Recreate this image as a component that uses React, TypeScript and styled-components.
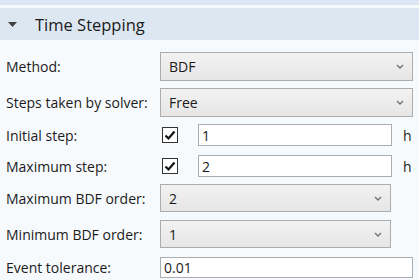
import React from 'react'
import styled, { createGlobalStyle } from 'styled-components'

const Global = createGlobalStyle`
  html, body {
    margin: 0;
    padding: 0;
    background: #f7fafd;
  }
  body {
    font-family: "Open Sans", "Noto Sans", sans-serif;
    color: #1b1b1b;
  }
`

const Page = styled.div`
  width: 419px;
  height: 280px;
  overflow: hidden;
  background: #f7fafd;
`

const TopStrip = styled.div`
  height: 5px;
  background: #dce7f3;
  margin-bottom: 3px;
`

const SectionHeader = styled.div`
  height: 32px;
  background: #dde7f2;
  display: flex;
  align-items: center;
  gap: 0;
  font-size: 16.5px;
  color: #1a1a1a;
`

const Caret = styled.svg`
  width: 9px;
  height: 5px;
  margin: 0 18px 0 8px;
`

const Body = styled.div`
  display: flex;
  flex-direction: column;
  padding: 0 6px 0 6px;
`

const Row = styled.div<{ $top: number; $h: number }>`
  display: flex;
  align-items: center;
  margin-top: ${p => p.$top}px;
  height: ${p => p.$h}px;
`

const Label = styled.div`
  width: 154px;
  flex: none;
  font-size: 14px;
`

const Select = styled.div<{ $w: number }>`
  box-sizing: border-box;
  width: ${p => p.$w}px;
  height: 100%;
  border: 1px solid #acacac;
  background: linear-gradient(#f2f2f2, #e6e6e6);
  display: flex;
  align-items: center;
  justify-content: space-between;
  padding: 0 8px 0 8px;
  font-size: 14px;
`

const Chevron = styled.svg`
  width: 8px;
  height: 5px;
`

const Check = styled.div`
  box-sizing: border-box;
  width: 16px;
  height: 16px;
  margin: 0 20px 0 2px;
  border: 1px solid #333;
  background: #fff;
  display: flex;
  align-items: center;
  justify-content: center;
`

const Input = styled.div<{ $w: number }>`
  box-sizing: border-box;
  width: ${p => p.$w}px;
  height: 100%;
  border: 1px solid #abadb3;
  background: #fff;
  display: flex;
  align-items: center;
  padding-left: 3px;
  font-size: 14px;
`

const Unit = styled.div`
  margin-left: 11px;
  font-size: 14px;
`

function Drop({ value, w }: { value: string; w: number }) {
  return (
    <Select $w={w}>
      <span>{value}</span>
      <Chevron viewBox="0 0 8 5">
        <path d="M1 1 L4 4 L7 1" stroke="#707070" strokeWidth="1.3" fill="none" />
      </Chevron>
    </Select>
  )
}

function Tick() {
  return (
    <Check>
      <svg width="12" height="11" viewBox="0 0 12 11">
        <path d="M1.5 5.5 L4.5 8.5 L10.5 1.5" stroke="#111" strokeWidth="2.2" fill="none" />
      </svg>
    </Check>
  )
}

export default function App() {
  return (
    <Page>
      <Global />
      <TopStrip />
      <SectionHeader>
        <Caret viewBox="0 0 9 5">
          <path d="M0 0 H9 L4.5 5 Z" fill="#404040" />
        </Caret>
        Time Stepping
      </SectionHeader>
      <Body>
        <Row $top={12} $h={29}>
          <Label>Method:</Label>
          <Drop value="BDF" w={253} />
        </Row>
        <Row $top={7} $h={29}>
          <Label>Steps taken by solver:</Label>
          <Drop value="Free" w={253} />
        </Row>
        <Row $top={7} $h={22}>
          <Label>Initial step:</Label>
          <Tick />
          <Input $w={194}>1</Input>
          <Unit>h</Unit>
        </Row>
        <Row $top={9} $h={22}>
          <Label>Maximum step:</Label>
          <Tick />
          <Input $w={194}>2</Input>
          <Unit>h</Unit>
        </Row>
        <Row $top={7} $h={28}>
          <Label>Maximum BDF order:</Label>
          <Drop value="2" w={231} />
        </Row>
        <Row $top={8} $h={28}>
          <Label>Minimum BDF order:</Label>
          <Drop value="1" w={231} />
        </Row>
        <Row $top={9} $h={21}>
          <Label>Event tolerance:</Label>
          <Input $w={253}>0.01</Input>
        </Row>
      </Body>
    </Page>
  )
}
